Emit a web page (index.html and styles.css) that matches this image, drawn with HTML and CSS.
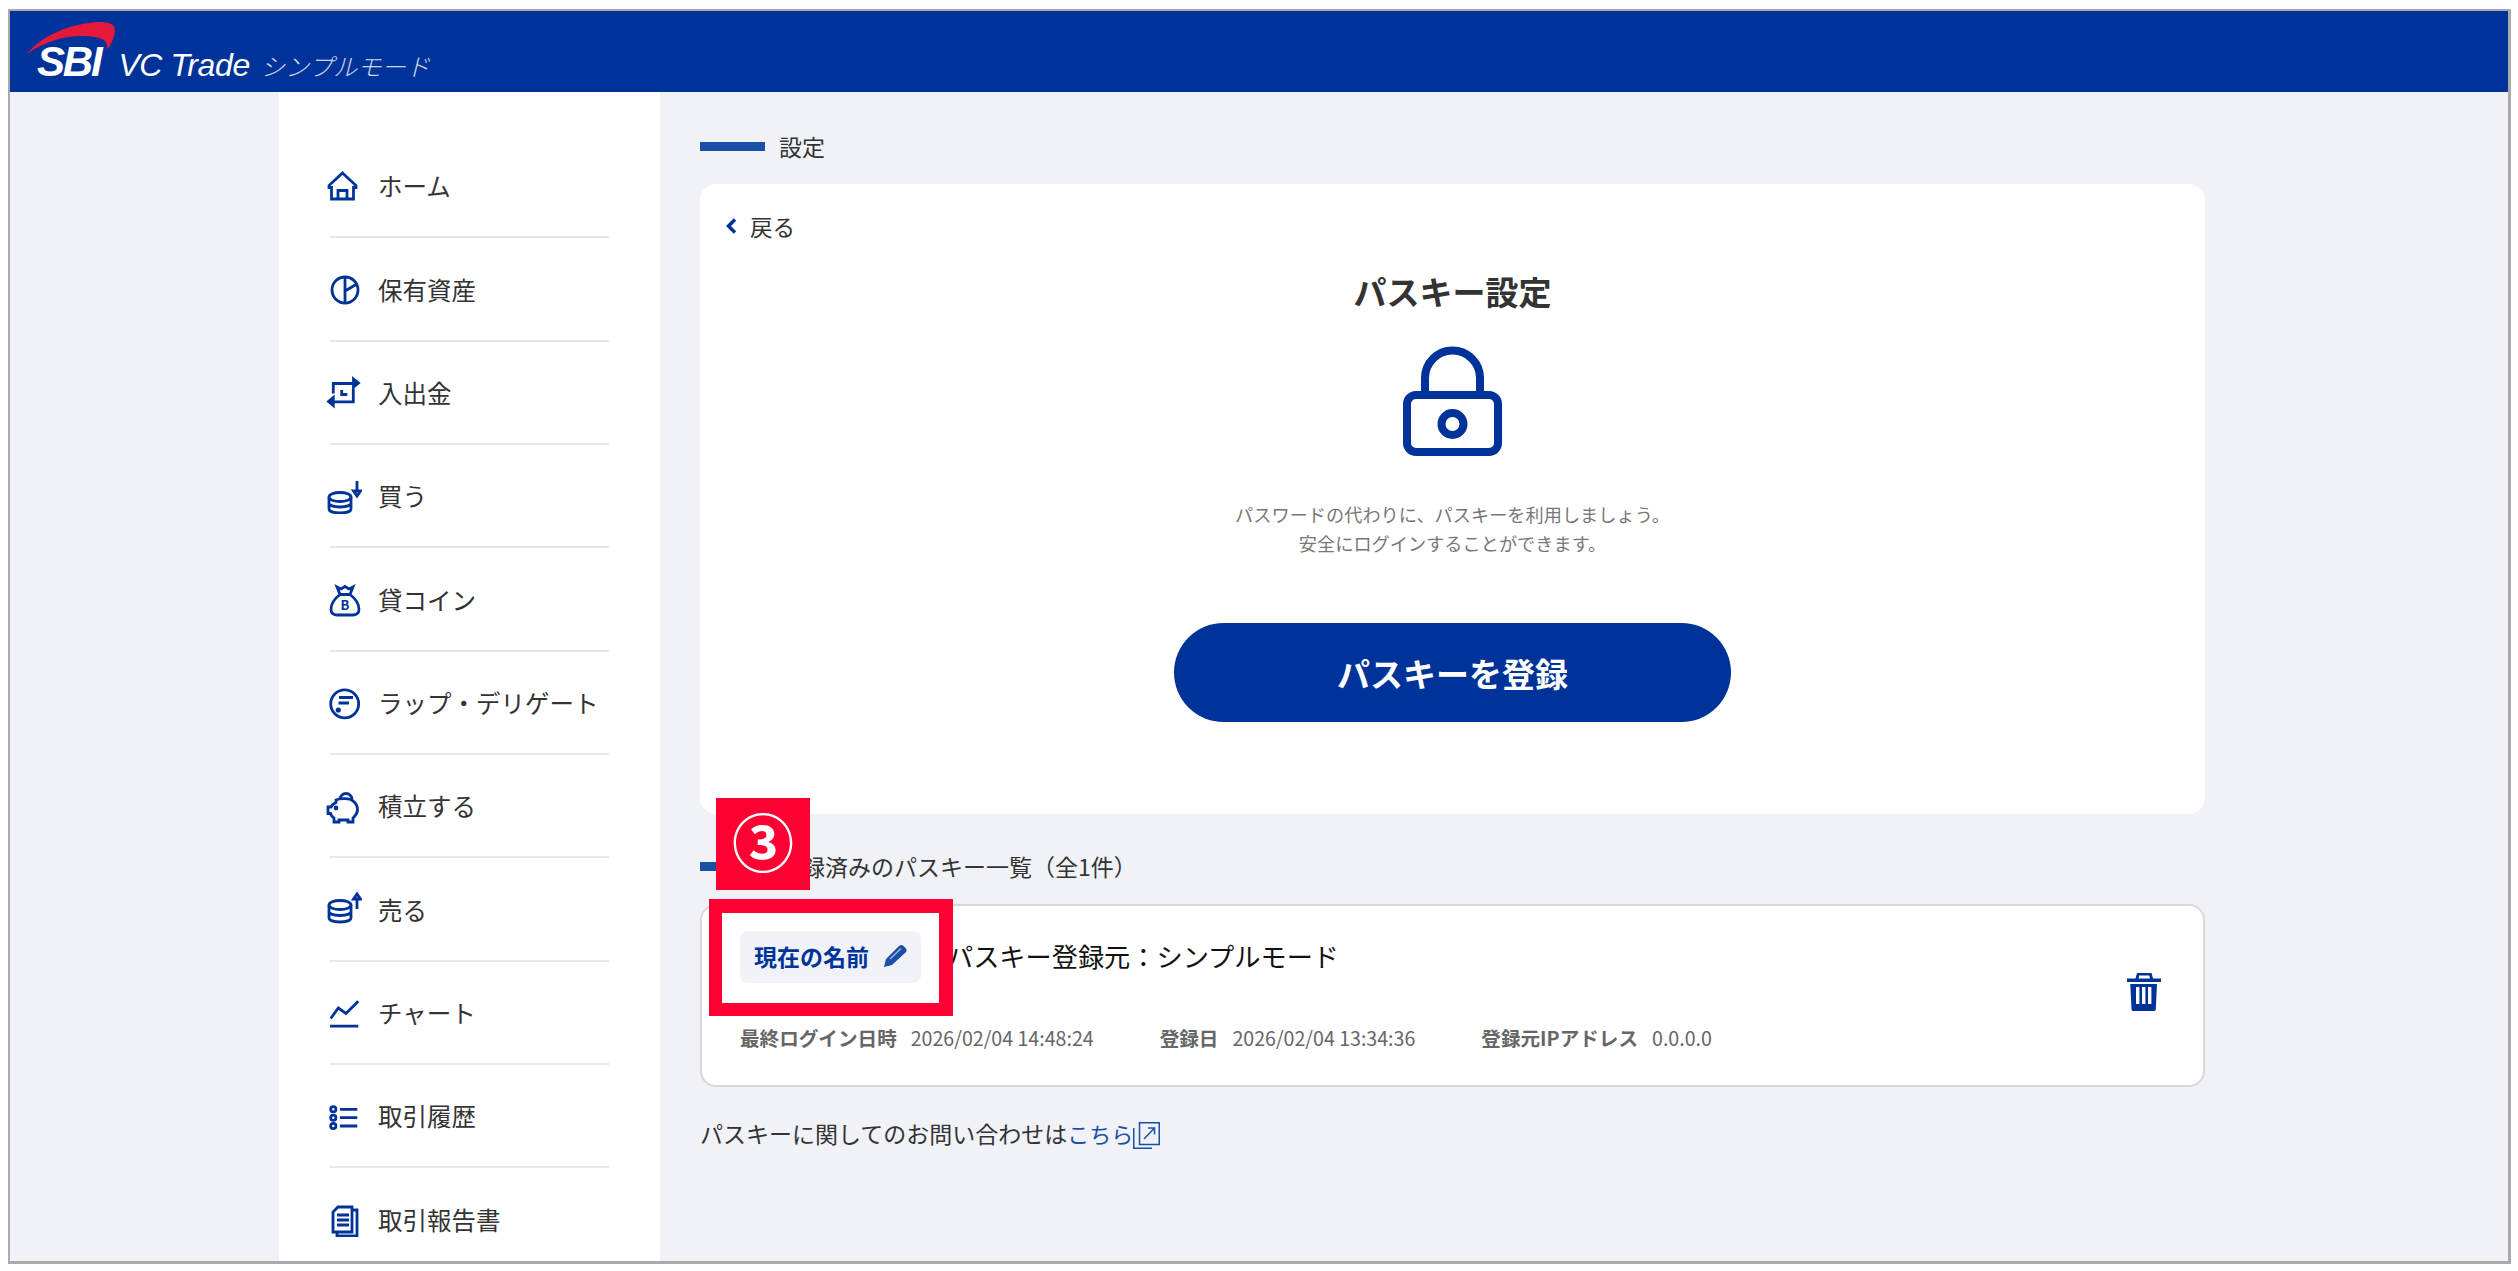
FILE: index.html
```html
<!DOCTYPE html>
<html lang="ja">
<head>
    <meta charset="UTF-8">
    <title>パスキー設定</title>
    <link rel="stylesheet" href="styles.css">
</head>
<body>
    <div class="frame">
        <header class="header">
            <div class="logo">
                <svg class="logo-swoosh" width="90" height="34" viewBox="0 0 90 34">
                    <path d="M0 32C14 14 44 1 72 0C82 0 88 2 88 8C88 15 84 22 80 28C81 20 78 17 68 15C48 12 22 16 0 32Z" fill="#e6193c"/>
                </svg>
                <span class="logo-sbi">SBI</span>
                <span class="logo-vc">VC Trade</span>
                <span class="logo-mode">シンプルモード</span>
            </div>
        </header>

        <div class="layout">
            <nav class="sidebar">
                <a class="nav-item">
                    <svg class="nav-icon" viewBox="0 0 36 36"><path d="M16.5 5L30 17.5V19.5H27.5V31H5.5V19.5H3V17.5Z"/><path d="M12 31V22.5H21V31"/></svg>
                    ホーム
                </a>
                <a class="nav-item">
                    <svg class="nav-icon" viewBox="0 0 36 36"><circle cx="19" cy="19" r="13"/><path d="M19 6V32M19 20L31 13"/></svg>
                    保有資産
                </a>
                <a class="nav-item">
                    <svg class="nav-icon" viewBox="0 0 36 36"><path d="M7.3 19.5V9.5H27.5M27.3 14.5V27.8H7.5M15.7 16V20.5H21.3"/><path class="solid" d="M27.5 5L32.5 9L27.5 13ZM7.3 23.5L2.5 27.5L7.3 31.5Z"/></svg>
                    入出金
                </a>
                <a class="nav-item">
                    <svg class="nav-icon" viewBox="0 0 36 36"><ellipse cx="14" cy="19" rx="11" ry="4.5"/><path d="M3 19V31C3 33.5 8 35 14 35S25 33.5 25 31V19M3 25C3 27.5 8 29 14 29S25 27.5 25 25"/><path d="M31 3V13"/><path d="M27.5 13H34.5L31 18Z"/></svg>
                    買う
                </a>
                <a class="nav-item">
                    <svg class="nav-icon" viewBox="0 0 36 36"><path d="M14 13.5C8 18 5 24 5 28.5C5 32.5 8 34 11 34H27C30 34 33 32.5 33 28.5C33 24 30 18 24 13.5ZM14 13.5L11 6L15 8L19 5.5L23 8L27 6L24 13.5"/><text class="nav-icon-b" x="19" y="29">B</text></svg>
                    貸コイン
                </a>
                <a class="nav-item">
                    <svg class="nav-icon" viewBox="0 0 36 36"><circle cx="18.7" cy="19.8" r="14"/><path d="M13 13.5H27M12.5 19H23"/><circle class="solid" cx="12.3" cy="26" r="1.2"/></svg>
                    ラップ・デリゲート
                </a>
                <a class="nav-item">
                    <svg class="nav-icon" viewBox="0 0 36 36"><path d="M14 11.5A6 6 0 0 1 26 11.5"/><path d="M10 12C14 10 24 10 27 13C30 15 31.5 19 31.5 22C31.5 26 29 28 27 30V34H22V32H13V34H8V30C6 29 5 27 4.5 25.5H2V19H5C6 17 8 15.5 10 14.5Z"/><circle class="solid" cx="10" cy="20" r="1"/></svg>
                    積立する
                </a>
                <a class="nav-item">
                    <svg class="nav-icon" viewBox="0 0 36 36"><ellipse cx="14" cy="14" rx="11" ry="4.5"/><path d="M3 14V27C3 29.5 8 31 14 31S25 29.5 25 27V14M3 20.5C3 23 8 24.5 14 24.5S25 23 25 20.5"/><path d="M31 9V18"/><path d="M27.5 8H34.5L31 3Z"/></svg>
                    売る
                </a>
                <a class="nav-item">
                    <svg class="nav-icon" viewBox="0 0 36 36"><path d="M4.7 24.5L12.3 14L20 19.5L32.3 7.2M4 32.2H32.3"/></svg>
                    チャート
                </a>
                <a class="nav-item">
                    <svg class="nav-icon" viewBox="0 0 36 36"><circle cx="7.3" cy="11.3" r="2.6"/><circle cx="7.3" cy="19.7" r="2.6"/><circle cx="7.3" cy="28" r="2.6"/><path d="M14 11.3H31.3M14 19.7H31.3M14 28H31.3"/></svg>
                    取引履歴
                </a>
                <a class="nav-item">
                    <svg class="nav-icon" viewBox="0 0 36 36"><path d="M12 6H26V31H7V11Z"/><path d="M27 9H31V35H11V32"/><path d="M11 14H23M11 19H23M11 24H23"/></svg>
                    取引報告書
                </a>
            </nav>

            <main class="main">
                <h2 class="section-title"><span class="section-bar"></span>設定</h2>

                <section class="card card-passkey">
                    <a class="back-link">
                        <svg class="back-icon" width="11" height="16" viewBox="0 0 11 16"><path d="M9 1.5L2.5 8L9 14.5"/></svg>
                        戻る
                    </a>
                    <h1 class="passkey-title">パスキー設定</h1>
                    <svg class="lock-icon" width="100" height="110" viewBox="0 0 100 110">
                        <path d="M22 49V32A27.5 27.5 0 0 1 77 32V49"/>
                        <rect x="4" y="49" width="91" height="57" rx="9"/>
                        <circle cx="49.5" cy="78" r="11"/>
                    </svg>
                    <p class="passkey-text">パスワードの代わりに、パスキーを利用しましょう。<br>安全にログインすることができます。</p>
                    <button class="register-button">パスキーを登録</button>
                </section>

                <h2 class="section-title section-title-list"><span class="section-bar"></span>登録済みのパスキー一覧（全1件）</h2>

                <section class="card-list">
                    <div class="key-info">
                        <div class="key-head">
                            <span class="name-chip">現在の名前
                                <svg class="pencil" width="24" height="24" viewBox="0 0 24 24">
                                    <path d="M1 23L3 15L16 2C17.5 0.5 19 0.5 20.5 2L22.5 4C24 5.5 24 7 22.5 8.5L9 21Z"/>
                                    <path class="pencil-line" d="M7 15L18 4.5"/>
                                </svg>
                            </span>
                            <span class="key-source">パスキー登録元：シンプルモード</span>
                        </div>
                        <div class="key-meta">
                            <span class="meta-group"><b>最終ログイン日時</b>2026/02/04 14:48:24</span>
                            <span class="meta-group"><b>登録日</b>2026/02/04 13:34:36</span>
                            <span class="meta-group"><b>登録元IPアドレス</b>0.0.0.0</span>
                        </div>
                    </div>
                    <svg class="trash" width="34" height="40" viewBox="0 0 34 40">
                        <path d="M0 6.5H8.5L10 1H24.5L26 6.5H34V10H0Z M11.5 6.5H23L22.3 3.5H12.2Z" fill-rule="evenodd"/>
                        <path d="M3.3 12H30L28.8 37C28.7 38.5 28 39 27 39H6.5C5.3 39 4.6 38.5 4.5 37Z M9 15V32H12.4V15Z M15 15V32H18.4V15Z M21 15V32H24.4V15Z" fill-rule="evenodd"/>
                    </svg>
                </section>

                <p class="contact">パスキーに関してのお問い合わせは<a class="contact-link">こちら</a><svg class="external" width="27" height="27" viewBox="0 0 27 27"><path d="M6.5 .75H26.25V22.5H6.5ZM11 17L21 6.5M15 6H21.5V12.5"/><path d="M.75 6V26.25H19"/></svg></p>
            </main>
        </div>

        <div class="step-badge">③</div>
        <div class="step-box"></div>
    </div>
</body>
</html>
```

FILE: styles.css
```css
:root {
    --navy: #003399;
    --accent: #1a4fa8;
    --page-bg: #f0f2f7;
    --text-dark: #333333;
    --text-gray: #666666;
    --line: #e8e8e8;
    --mark-red: #ff0033;
}

* {
    box-sizing: border-box;
}

html, body {
    height: 100%;
}

body {
    margin: 0;
    padding: 9px 7px 7px 8px;
    background: #ffffff;
    font-family: "Noto Sans CJK JP", "Noto Sans", sans-serif;
    color: var(--text-dark);
    overflow: hidden;
}

.frame {
    position: relative;
    height: 100%;
    border: solid #aaaaaa;
    border-width: 2px 3px 3px 2px;
    background: var(--page-bg);
    overflow: hidden;
    display: flex;
    flex-direction: column;
}

/* header */
.header {
    flex: 0 0 81px;
    background: var(--navy);
    display: flex;
    align-items: flex-end;
    padding: 0 0 8px 27px;
}

.logo {
    position: relative;
    display: flex;
    align-items: baseline;
    color: #ffffff;
    line-height: 36px;
}

.logo-swoosh {
    position: absolute;
    left: -10px;
    top: -22px;
}

.logo-sbi {
    font-family: "Liberation Sans", sans-serif;
    font-size: 42px;
    font-weight: 700;
    font-style: italic;
    letter-spacing: -2.2px;
}

.logo-vc {
    font-family: "Liberation Sans", sans-serif;
    font-size: 32px;
    font-style: italic;
    letter-spacing: -.4px;
    margin-left: 18px;
}

.logo-mode {
    font-size: 24.3px;
    font-style: italic;
    font-weight: 300;
    color: #cdd6ec;
    margin-left: 11px;
}

/* sidebar */
.layout {
    flex: 1;
    display: flex;
    padding-left: 269px;
    min-height: 0;
}

.sidebar {
    flex: 0 0 381px;
    background: #ffffff;
    padding: 43px 51px 0;
}

.nav-item {
    height: 103.35px;
    display: flex;
    align-items: center;
    gap: 16px;
    margin: 0;
    font-size: 24.5px;
    border-bottom: 2px solid var(--line);
    white-space: nowrap;
}

.nav-icon {
    flex: 0 0 36px;
    width: 36px;
    height: 36px;
    margin-left: -4px;
    fill: none;
    stroke: var(--navy);
    stroke-width: 2.8;
}

.nav-icon .solid {
    fill: var(--navy);
}

.nav-icon-b {
    fill: var(--navy);
    stroke: none;
    font-size: 13px;
    font-weight: 700;
    text-anchor: middle;
}

/* main column */
.main {
    flex: 0 0 1545px;
    padding: 38px 0 0 40px;
}

.section-title {
    margin: 0 0 21px;
    display: flex;
    align-items: center;
    gap: 14px;
    font-size: 23px;
    line-height: 33px;
    font-weight: 400;
}

.section-title-list {
    margin-top: 36px;
}

.section-bar {
    width: 65px;
    height: 9px;
    background: var(--accent);
}

.card {
    background: #ffffff;
    border-radius: 16px;
}

.card-passkey {
    display: flex;
    flex-direction: column;
    align-items: center;
    height: 630px;
    padding-top: 22px;
}

.back-link {
    align-self: flex-start;
    display: flex;
    align-items: center;
    gap: 13px;
    margin-left: 26px;
    font-size: 22.5px;
    line-height: 40px;
}

.back-icon {
    fill: none;
    stroke: var(--navy);
    stroke-width: 3.5;
}

.passkey-title {
    margin: 25px 0 0;
    font-size: 33px;
    line-height: 40px;
    font-weight: 700;
}

.lock-icon {
    margin-top: 35px;
    fill: none;
    stroke: var(--navy);
    stroke-width: 8;
}

.passkey-text {
    margin: 44px 0 0;
    font-size: 18.2px;
    line-height: 29px;
    color: #777777;
    text-align: center;
}

.register-button {
    width: 557px;
    height: 99px;
    margin-top: 65px;
    border: none;
    border-radius: 50px;
    background: var(--navy);
    color: #ffffff;
    font-family: inherit;
    font-size: 33px;
    font-weight: 700;
}

/* registered passkey */
.card-list {
    height: 183px;
    padding: 25px 42px 0 38px;
    background: #ffffff;
    border: 2px solid #d8d8d8;
    border-radius: 16px;
    display: flex;
    justify-content: space-between;
    align-items: center;
}

.key-info {
    align-self: flex-start;
}

.key-head {
    display: flex;
    align-items: center;
    gap: 26px;
}

.name-chip {
    width: 181px;
    height: 52px;
    padding: 0 0 2px 14px;
    display: flex;
    align-items: center;
    gap: 14px;
    background: var(--page-bg);
    border-radius: 8px;
    color: var(--navy);
    font-size: 23px;
    font-weight: 700;
    white-space: nowrap;
}

.pencil {
    flex: none;
    fill: var(--accent);
}

.pencil-line {
    fill: none;
    stroke: #9db6e0;
    stroke-width: 1.5;
}

.key-source {
    padding-bottom: 2px;
    font-size: 26.2px;
    color: #111111;
}

.key-meta {
    display: flex;
    gap: 66px;
    margin-top: 40px;
    line-height: 30px;
    font-size: 19.6px;
    color: var(--text-gray);
}

.meta-group b {
    font-size: 19.6px;
    margin-right: 14px;
}

.trash {
    flex: none;
    margin-bottom: 33px;
    fill: var(--navy);
}

.contact {
    margin: 30px 0 0;
    display: flex;
    align-items: center;
    font-size: 23px;
    line-height: 33px;
}

.contact-link {
    color: var(--accent);
    font-size: 22px;
}

.external {
    flex: none;
    margin-top: 4px;
    fill: none;
    stroke: var(--accent);
    stroke-width: 1.5;
}

/* red annotation */
.step-badge {
    position: absolute;
    left: 706px;
    top: 787px;
    width: 94px;
    height: 92px;
    background: var(--mark-red);
    color: #ffffff;
    font-size: 62px;
    font-weight: 700;
    line-height: 84px;
    text-align: center;
}

.step-box {
    position: absolute;
    left: 699px;
    top: 888px;
    width: 244px;
    height: 117px;
    border: solid var(--mark-red);
    border-width: 14px 14px 13px 13px;
}
```
